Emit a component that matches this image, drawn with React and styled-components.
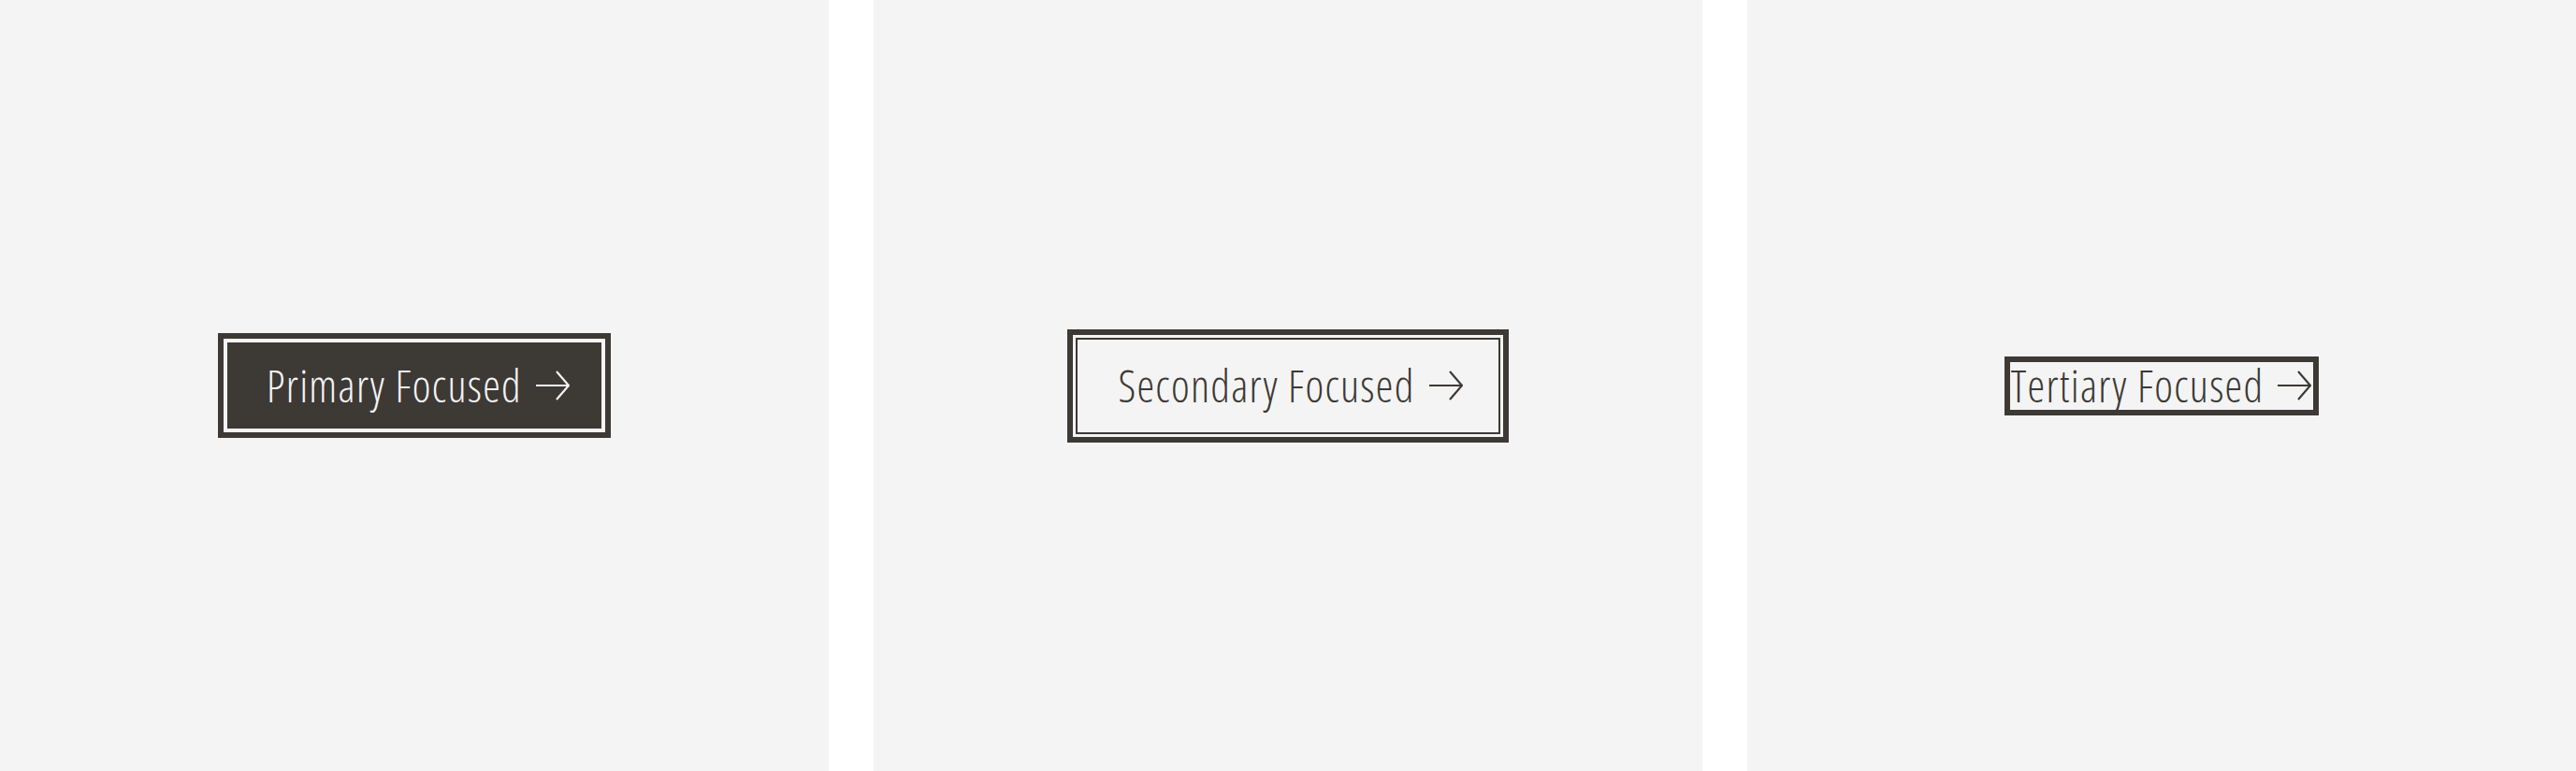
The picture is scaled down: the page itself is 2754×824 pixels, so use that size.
import React from "react";
import styled, { createGlobalStyle, css } from "styled-components";

const ink = "#3d3935";
const paper = "#f4f4f4";

const GlobalStyle = createGlobalStyle`
  html, body {
    margin: 0;
    padding: 0;
    background: #ffffff;
  }
  body {
    font-family: "Open Sans", "Liberation Sans", sans-serif;
  }
`;

const Page = styled.div`
  display: flex;
  gap: 48px;
  width: 2754px;
  height: 824px;
`;

const Panel = styled.section`
  flex: 1;
  display: flex;
  align-items: center;
  justify-content: center;
  background: ${paper};
`;

const variants = {
  primary: css`
    height: 112px;
    padding: 0 38px 0 46px;
    color: ${paper};
    background: ${ink};
    border: 6px solid ${ink};
    box-shadow: inset 0 0 0 4px ${paper};
  `,
  secondary: css`
    height: 103px;
    padding: 0 38px 0 43px;
    color: ${ink};
    background: transparent;
    border: 2px solid ${ink};
    outline: 6px solid ${ink};
    outline-offset: 3px;
  `,
  tertiary: css`
    height: 63px;
    padding: 0 2px 0 1px;
    color: ${ink};
    background: transparent;
    border: 6px solid ${ink};
  `,
};

const Button = styled.button`
  box-sizing: border-box;
  display: inline-flex;
  align-items: center;
  gap: 15px;
  margin: 0;
  border-radius: 0;
  font-family: inherit;
  font-size: 47px;
  font-weight: 300;
  font-stretch: condensed;
  letter-spacing: 1.3px;
  line-height: 1;
  white-space: nowrap;
  cursor: pointer;
  ${({ $variant }) => variants[$variant]}
`;

const Label = styled.span`
  display: block;
`;

const Arrow = () => (
  <svg width="36" height="32" viewBox="0 0 36 32" fill="none" stroke="currentColor" strokeWidth="2.2">
    <path d="M0 16H35" />
    <path d="M22 1L35 16L22 31" />
  </svg>
);

const buttons = [
  { variant: "primary", label: "Primary Focused" },
  { variant: "secondary", label: "Secondary Focused" },
  { variant: "tertiary", label: "Tertiary Focused" },
];

export default function App() {
  return (
    <>
      <GlobalStyle />
      <Page>
        {buttons.map((b) => (
          <Panel key={b.variant}>
            <Button $variant={b.variant}>
              <Label>{b.label}</Label>
              <Arrow />
            </Button>
          </Panel>
        ))}
      </Page>
    </>
  );
}
